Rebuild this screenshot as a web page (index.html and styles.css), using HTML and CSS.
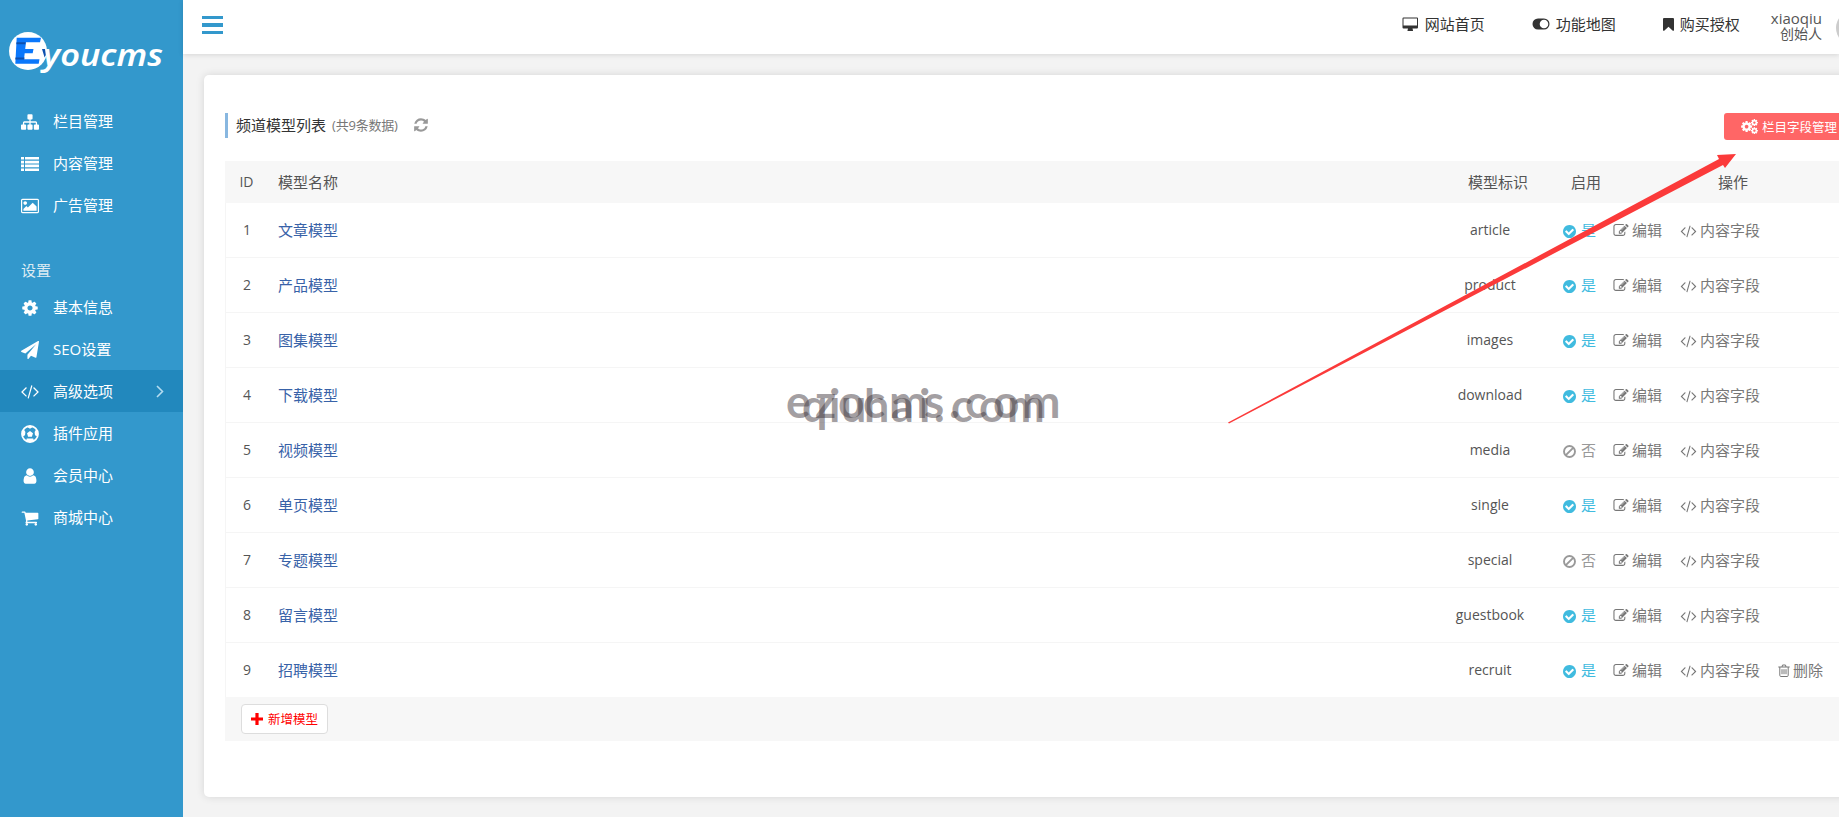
FILE: index.html
```
<!DOCTYPE html>
<html lang="zh-CN">
<head>
    <meta charset="UTF-8">
    <title>Eyoucms</title>
    <link rel="stylesheet" href="styles.css">
</head>
<body>

    <!-- icon sprite -->
    <svg class="sprite">
        <symbol id="i-sitemap" viewBox="0 0 1792 1792"><path d="M1792 1248v320q0 40-28 68t-68 28h-320q-40 0-68-28t-28-68v-320q0-40 28-68t68-28h96v-192h-512v192h96q40 0 68 28t28 68v320q0 40-28 68t-68 28h-320q-40 0-68-28t-28-68v-320q0-40 28-68t68-28h96v-192h-512v192h96q40 0 68 28t28 68v320q0 40-28 68t-68 28h-320q-40 0-68-28t-28-68v-320q0-40 28-68t68-28h96v-192q0-52 38-90t90-38h512v-192h-96q-40 0-68-28t-28-68v-320q0-40 28-68t68-28h320q40 0 68 28t28 68v320q0 40-28 68t-68 28h-96v192h512q52 0 90 38t38 90v192h96q40 0 68 28t28 68z"/></symbol>
        <symbol id="i-list" viewBox="0 0 18 18"><path d="M0 2h3v2.6H0zM4 2h14v2.6H4zM0 5.8h3v2.6H0zM4 5.8h14v2.6H4zM0 9.6h3v2.6H0zM4 9.6h14v2.6H4zM0 13.4h3V16H0zM4 13.4h14V16H4z"/></symbol>
        <symbol id="i-picture" viewBox="-64 0 1920 1792"><path d="M576 576q0 80-56 136t-136 56-136-56-56-136 56-136 136-56 136 56 56 136zm1024 384v448h-1408v-192l320-320 160 160 512-512zm96-704h-1600q-13 0-22.500 9.500t-9.500 22.500v1216q0 13 9.500 22.500t22.500 9.500h1600q13 0 22.500-9.500t9.500-22.500v-1216q0-13-9.500-22.500t-22.500-9.500zm160 32v1216q0 66-47 113t-113 47h-1600q-66 0-113-47t-47-113v-1216q0-66 47-113t113-47h1600q66 0 113 47t47 113z"/></symbol>
        <symbol id="i-cog" viewBox="0 0 1792 1792"><path d="M1152 896q0-106-75-181t-181-75-181 75-75 181 75 181 181 75 181-75 75-181zm512-109v222q0 12-8 23t-20 13l-185 28q-19 54-39 91 35 50 107 138 10 12 10 25t-9 23q-27 37-99 108t-94 71q-12 0-26-9l-138-108q-44 23-91 38-16 136-29 186-7 28-36 28h-222q-14 0-24.500-8.500t-11.500-21.500l-28-184q-49-16-90-37l-141 107q-10 9-25 9-14 0-25-11-126-114-165-168-7-10-7-23 0-12 8-23 15-21 51-66.500t54-70.500q-27-50-41-99l-183-27q-13-2-21-12.500t-8-23.500v-222q0-12 8-23t19-13l186-28q14-46 39-92-40-57-107-138-10-12-10-24 0-10 9-23 26-36 98.500-107.500t94.500-71.500q13 0 26 10l138 107q44-23 91-38 16-136 29-186 7-28 36-28h222q14 0 24.500 8.500t11.500 21.500l28 184q49 16 90 37l142-107q9-9 24-9 13 0 25 10 129 119 165 170 7 8 7 22 0 12-8 23-15 21-51 66.500t-54 70.500q26 50 41 98l183 28q13 2 21 12.500t8 23.500z"/></symbol>
        <symbol id="i-cogs" viewBox="0 0 17 15"><use href="#i-cog" x="-.8" y="1.200" width="12.800" height="12.800"/><use href="#i-cog" x="9.300" y="-.5" width="8.200" height="8.200"/><use href="#i-cog" x="9.300" y="7.600" width="8.200" height="8.200"/></symbol>
        <symbol id="i-plane" viewBox="0 0 1792 1792"><path d="M1764 11q33 24 27 64l-256 1536q-5 29-32 45-14 8-31 8-11 0-24-5l-453-185-242 295q-18 23-49 23-13 0-22-4-19-7-30.500-23.500t-11.500-36.500v-349l864-1059-1069 925-395-162q-37-14-40-55-2-40 32-59l1664-960q15-9 32-9 20 0 36 11z"/></symbol>
        <symbol id="i-code" viewBox="20 200 1880 1536"><path d="M617 1399l-50 50q-10 10-23 10t-23-10l-466-466q-10-10-10-23t10-23l466-466q10-10 23-10t23 10l50 50q10 10 10 23t-10 23l-393 393 393 393q10 10 10 23t-10 23zm591-1067l-373 1291q-4 13-15.500 19.500t-23.500 2.500l-62-17q-13-4-19.500-15.500t-2.500-24.500l373-1291q4-13 15.500-19.500t23.500-2.500l62 17q13 4 19.500 15.500t2.500 24.500zm657 651l-466 466q-10 10-23 10t-23-10l-50-50q-10-10-10-23t10-23l393-393-393-393q-10-10-10-23t10-23l50-50q10-10 23-10t23 10l466 466q10 10 10 23t-10 23z"/></symbol>
        <symbol id="i-ball" viewBox="0 0 18 18"><circle cx="9" cy="9" r="8" fill="none" stroke="currentColor" stroke-width="1.800"/><path d="M9 6l3 2.200-1.100 3.500H7.100L6 8.200zM5.500 1.600L9 3.800l3.500-2.200-3.500-.9zM1.300 6.500l.2 5L4 10.200l.4-3.100L2.600 4zM16.700 6.500l-.2 5-2.500-1.300-.4-3.100L15.400 4zM5 15.800l4 1.400 4-1.400-.8-2.400H5.800z"/></symbol>
        <symbol id="i-user" viewBox="0 0 1792 1792"><path d="M1536 1399q0 109-62.500 187t-150.500 78h-854q-88 0-150.500-78t-62.500-187q0-85 8.500-160.500t31.500-152 58.500-131 94-89 134.500-34.500q131 128 313 128t313-128q76 0 134.500 34.500t94 89 58.500 131 31.500 152 8.500 160.500zm-256-887q0 159-112.500 271.500t-271.500 112.500-271.500-112.500-112.500-271.500 112.500-271.500 271.500-112.500 271.500 112.500 112.500 271.500z"/></symbol>
        <symbol id="i-cart" viewBox="0 0 1792 1792"><path d="M704 1536q0 52-38 90t-90 38-90-38-38-90 38-90 90-38 90 38 38 90zm896 0q0 52-38 90t-90 38-90-38-38-90 38-90 90-38 90 38 38 90zm128-1088v512q0 24-16.500 42.500t-40.500 21.500l-1044 122q13 60 13 70 0 16-24 64h920q26 0 45 19t19 45-19 45-45 19h-1024q-26 0-45-19t-19-45q0-11 8-31.500t16-36 21.500-40 15.500-29.500l-177-823h-204q-26 0-45-19t-19-45 19-45 45-19h256q16 0 28.500 6.500t19.500 15.500 13 24.500 8 26 5.500 29.500 4.500 26h1201q26 0 45 19t19 45z"/></symbol>
        <symbol id="i-right" viewBox="0 0 8 13"><path d="M1 1l5.500 5.500L1 12" fill="none" stroke="currentColor" stroke-width="1.600"/></symbol>
        <symbol id="i-desktop" viewBox="0 0 17 15"><path fill-rule="evenodd" d="M1.500.5h13.500q1 0 1 1v9q0 1-1 1H10.500l.5 2q.2.500-.5.500H6q-.7 0-.5-.5l.5-2H1.500q-1 0-1-1v-9q0-1 1-1zM1.500 1.500v7H15v-7z"/></symbol>
        <symbol id="i-toggle" viewBox="0 0 18 12"><path fill-rule="evenodd" d="M6 0.500h6a5.500 5.500 0 0 1 0 11H6a5.500 5.500 0 0 1 0-11zM12 1.700a4.300 4.300 0 1 0 0 8.600 4.300 4.300 0 0 0 0-8.600z"/></symbol>
        <symbol id="i-bookmark" viewBox="0 0 11 13"><path d="M1 0h9q1 0 1 1v11.200q-.3 1-1.200.5L5.500 8.800 1.200 12.700Q.3 13.200 0 12.200V1q0-1 1-1z"/></symbol>
        <symbol id="i-refresh" viewBox="0 0 1792 1792"><path d="M1639 1056q0 5-1 7-64 268-268 434.500t-478 166.500q-146 0-282.500-55t-243.500-157l-129 129q-19 19-45 19t-45-19-19-45v-448q0-26 19-45t45-19h448q26 0 45 19t19 45-19 45l-137 137q71 66 161 102t187 36q134 0 250-65t186-179q11-17 53-117 8-23 30-23h192q13 0 22.500 9.500t9.500 22.500zm25-800v448q0 26-19 45t-45 19h-448q-26 0-45-19t-19-45 19-45l138-138q-148-137-349-137-134 0-250 65t-186 179q-11 17-53 117-8 23-30 23h-199q-13 0-22.500-9.500t-9.500-22.500v-7q65-268 270-434.500t480-166.500q146 0 284 55.500t245 156.500l130-129q19-19 45-19t45 19 19 45z"/></symbol>
        <symbol id="i-check" viewBox="128 128 1536 1536"><path d="M1412 734q0-28-18-46l-91-90q-19-19-45-19t-45 19l-408 407-226-226q-19-19-45-19t-45 19l-91 90q-18 18-18 46 0 27 18 45l362 362q19 19 45 19 27 0 46-19l543-543q18-18 18-45zm252 162q0 209-103 385.500t-279.500 279.500-385.500 103-385.500-103-279.500-279.500-103-385.500 103-385.500 279.500-279.500 385.500-103 385.500 103 279.500 279.500 103 385.500z"/></symbol>
        <symbol id="i-ban" viewBox="0 0 13 13"><path d="M6.500 1a5.500 5.500 0 1 0 0 11 5.500 5.500 0 0 0 0-11zM10.400 2.600L2.600 10.400" fill="none" stroke="currentColor" stroke-width="1.900"/></symbol>
        <symbol id="i-edit" viewBox="0 128 1792 1536"><path d="M888 1184l116-116-152-152-116 116v56h96v96h56zm440-720q-16-16-33 1l-350 350q-17 17-1 33t33-1l350-350q17-17 1-33zm80 594v190q0 119-84.500 203.500t-203.500 84.500h-832q-119 0-203.500-84.500t-84.500-203.500v-832q0-119 84.500-203.500t203.500-84.500h832q63 0 117 25 15 7 18 23 3 17-9 29l-49 49q-14 14-32 8-23-6-45-6h-832q-66 0-113 47t-47 113v832q0 66 47 113t113 47h832q66 0 113-47t47-113v-126q0-13 9-22l64-64q15-15 35-7t20 29zm-96-738l288 288-672 672h-288v-288zm444 132l-92 92-288-288 92-92q28-28 68-28t68 28l152 152q28 28 28 68t-28 68z"/></symbol>
        <symbol id="i-trash" viewBox="0 0 12 13"><path d="M.3 3h11.400M4 3l.5-2h3L8 3M1.800 3v8.300q0 1.200 1 1.200h6.400q1 0 1-1.200V3M4 5.200v5M6 5.200v5M8 5.200v5" fill="none" stroke="currentColor"/></symbol>
        <symbol id="i-plus" viewBox="0 0 12 12"><path d="M4.400 0h3.200v4.400H12v3.200H7.600V12H4.400V7.600H0V4.400h4.400z"/></symbol>
    </svg>

    <div class="sidebar">
        <div class="logo">
            <svg width="160" height="44" viewBox="0 0 160 44">
                <circle cx="19" cy="19" r="19" fill="#fff"/>
                <text class="logo-text" x="34" y="34" textLength="120" lengthAdjust="spacingAndGlyphs">youcms</text>
                <path d="M7.700 5.700H32l-1 4.600H17l-.8 6.700h8.300l-.8 4.300h-8l-.7 6h15.500l-.8 4.500H6.300z" fill="#0a77fb"/>
                <path d="M7.500 10.300h9l-.2 2h-9zM6.500 25.600h9l-.2 2h-9zM33 17h3l.8 6-1.200 2.500z" fill="#0c4fae"/>
            </svg>
        </div>
        <div class="nav">
            <a class="nav-item"><svg class="icon"><use href="#i-sitemap"/></svg>栏目管理</a>
            <a class="nav-item"><svg class="icon"><use href="#i-list"/></svg>内容管理</a>
            <a class="nav-item"><svg class="icon"><use href="#i-picture"/></svg>广告管理</a>
        </div>
        <div class="nav-title">设置</div>
        <div class="nav">
            <a class="nav-item"><svg class="icon"><use href="#i-cog"/></svg>基本信息</a>
            <a class="nav-item"><svg class="icon"><use href="#i-plane"/></svg>SEO设置</a>
            <a class="nav-item active"><svg class="icon"><use href="#i-code"/></svg>高级选项<svg class="arrow-right"><use href="#i-right"/></svg></a>
            <a class="nav-item"><svg class="icon"><use href="#i-ball"/></svg>插件应用</a>
            <a class="nav-item"><svg class="icon"><use href="#i-user"/></svg>会员中心</a>
            <a class="nav-item"><svg class="icon"><use href="#i-cart"/></svg>商城中心</a>
        </div>
    </div>

    <div class="main">
        <div class="header">
            <div class="menu-btn"><span></span><span></span><span></span></div>
            <div class="header-links">
                <a class="link-home"><svg class="ic-desktop"><use href="#i-desktop"/></svg>网站首页</a>
                <a class="link-map"><svg class="ic-toggle"><use href="#i-toggle"/></svg>功能地图</a>
                <a class="link-buy"><svg class="ic-bookmark"><use href="#i-bookmark"/></svg>购买授权</a>
                <div class="user">
                    <div class="user-name">xiaoqiu</div>
                    <div class="user-role">创始人</div>
                </div>
                <div class="avatar"></div>
            </div>
        </div>

        <div class="card">
            <div class="card-top">
                <div class="title">频道模型列表 <small>(共9条数据)</small><svg class="ic-refresh"><use href="#i-refresh"/></svg></div>
                <a class="field-btn"><svg class="ic-cogs"><use href="#i-cogs"/></svg>栏目字段管理</a>
            </div>

            <table>
                <thead>
                    <tr><th class="c-id">ID</th><th class="c-name">模型名称</th><th class="c-code">模型标识</th><th class="c-on">启用</th><th class="c-op">操作</th></tr>
                </thead>
                <tbody>
                    <tr>
                        <td class="c-id">1</td><td class="c-name">文章模型</td><td class="c-code">article</td>
                        <td class="c-on yes"><svg><use href="#i-check"/></svg>是</td>
                        <td class="c-op"><a><svg class="ic-edit"><use href="#i-edit"/></svg>编辑</a><a><svg class="ic-code"><use href="#i-code"/></svg>内容字段</a></td>
                    </tr>
                    <tr>
                        <td class="c-id">2</td><td class="c-name">产品模型</td><td class="c-code">product</td>
                        <td class="c-on yes"><svg><use href="#i-check"/></svg>是</td>
                        <td class="c-op"><a><svg class="ic-edit"><use href="#i-edit"/></svg>编辑</a><a><svg class="ic-code"><use href="#i-code"/></svg>内容字段</a></td>
                    </tr>
                    <tr>
                        <td class="c-id">3</td><td class="c-name">图集模型</td><td class="c-code">images</td>
                        <td class="c-on yes"><svg><use href="#i-check"/></svg>是</td>
                        <td class="c-op"><a><svg class="ic-edit"><use href="#i-edit"/></svg>编辑</a><a><svg class="ic-code"><use href="#i-code"/></svg>内容字段</a></td>
                    </tr>
                    <tr>
                        <td class="c-id">4</td><td class="c-name">下载模型</td><td class="c-code">download</td>
                        <td class="c-on yes"><svg><use href="#i-check"/></svg>是</td>
                        <td class="c-op"><a><svg class="ic-edit"><use href="#i-edit"/></svg>编辑</a><a><svg class="ic-code"><use href="#i-code"/></svg>内容字段</a></td>
                    </tr>
                    <tr>
                        <td class="c-id">5</td><td class="c-name">视频模型</td><td class="c-code">media</td>
                        <td class="c-on no"><svg><use href="#i-ban"/></svg>否</td>
                        <td class="c-op"><a><svg class="ic-edit"><use href="#i-edit"/></svg>编辑</a><a><svg class="ic-code"><use href="#i-code"/></svg>内容字段</a></td>
                    </tr>
                    <tr>
                        <td class="c-id">6</td><td class="c-name">单页模型</td><td class="c-code">single</td>
                        <td class="c-on yes"><svg><use href="#i-check"/></svg>是</td>
                        <td class="c-op"><a><svg class="ic-edit"><use href="#i-edit"/></svg>编辑</a><a><svg class="ic-code"><use href="#i-code"/></svg>内容字段</a></td>
                    </tr>
                    <tr>
                        <td class="c-id">7</td><td class="c-name">专题模型</td><td class="c-code">special</td>
                        <td class="c-on no"><svg><use href="#i-ban"/></svg>否</td>
                        <td class="c-op"><a><svg class="ic-edit"><use href="#i-edit"/></svg>编辑</a><a><svg class="ic-code"><use href="#i-code"/></svg>内容字段</a></td>
                    </tr>
                    <tr>
                        <td class="c-id">8</td><td class="c-name">留言模型</td><td class="c-code">guestbook</td>
                        <td class="c-on yes"><svg><use href="#i-check"/></svg>是</td>
                        <td class="c-op"><a><svg class="ic-edit"><use href="#i-edit"/></svg>编辑</a><a><svg class="ic-code"><use href="#i-code"/></svg>内容字段</a></td>
                    </tr>
                    <tr>
                        <td class="c-id">9</td><td class="c-name">招聘模型</td><td class="c-code">recruit</td>
                        <td class="c-on yes"><svg><use href="#i-check"/></svg>是</td>
                        <td class="c-op"><a><svg class="ic-edit"><use href="#i-edit"/></svg>编辑</a><a><svg class="ic-code"><use href="#i-code"/></svg>内容字段</a><a><svg class="ic-trash"><use href="#i-trash"/></svg>删除</a></td>
                    </tr>
                </tbody>
            </table>
            <div class="table-foot">
                <a class="add-btn"><svg><use href="#i-plus"/></svg>新增模型</a>
            </div>
        </div>
    </div>

    <!-- watermark and pointer arrow over the page -->
    <svg class="overlay" viewBox="0 0 1839 817">
        <g class="watermark">
            <text class="mark-a" y="418" x="786 815 838 863 889 924 949 965 993 1022">ezocms.com</text>
            <text class="mark-b" y="422" x="802 829 841 864 891 919 934 951 979 1007">qiuhai.com</text>
        </g>
        <path d="M1228 422.500L1719 159l-2-4 19-1-11 14-2-3L1229 423.500z" fill="#fb3a3a"/>
    </svg>

</body>
</html>
```
FILE: styles.css
```
* {
    box-sizing: border-box;
}

body {
    margin: 0;
    display: flex;
    height: 100vh;
    overflow: hidden;
    background: #f3f3f3;
    font-family: "Open Sans", "Noto Sans CJK SC", sans-serif;
    font-size: 15px;
    color: #555;
}

svg {
    fill: currentColor;
    flex: none;
}

.sprite {
    display: none;
}

/* sidebar */
.sidebar {
    width: 183px;
    flex: none;
    background: #3398cc;
    color: #fff;
}

.logo {
    height: 100px;
    padding: 32px 0 0 9px;
}

.logo-text {
    font: italic 600 31px "Noto Sans", sans-serif;
    fill: #fff;
}

.nav-item {
    display: flex;
    align-items: center;
    height: 42px;
    padding: 0 0 2px 21px;
}

.nav-item .icon {
    width: 18px;
    height: 18px;
    margin: 3px 14px 0 0;
}

.nav-item.active {
    background: #2288bd;
}

.arrow-right {
    width: 8px;
    height: 13px;
    margin: 3px 19px 0 auto;
    color: #b5dcf0;
}

.nav-title {
    height: 60px;
    padding: 33px 0 0 21px;
    line-height: 22px;
    color: #dcebf3;
}

/* header */
.main {
    flex: 1;
    min-width: 0;
}

.header {
    display: flex;
    height: 54px;
    background: #fff;
    box-shadow: 0 1px 5px rgba(0, 0, 0, 0.12);
    color: #333;
    overflow-x: clip;
}

.menu-btn {
    display: flex;
    flex-direction: column;
    gap: 4px;
    margin: 16px 0 0 19px;
}

.menu-btn span {
    width: 21px;
    height: 3.300px;
    background: #3398cc;
}

.header-links {
    display: flex;
    margin-left: auto;
}

.header-links a {
    display: flex;
    align-items: center;
    height: 46px;
    gap: 6px;
    margin-right: 47px;
}

.header-links a svg {
    margin-top: 2px;
}

.header-links .link-buy {
    margin-right: 31px;
}

.ic-desktop {
    width: 17px;
    height: 15px;
}

.ic-toggle {
    width: 18px;
    height: 12px;
}

.ic-bookmark {
    width: 11px;
    height: 13px;
}

.user {
    padding-top: 10px;
    line-height: 16px;
    text-align: right;
    color: #555;
}

.user-role {
    font-size: 14px;
    line-height: 15px;
}

.avatar {
    width: 34px;
    height: 34px;
    margin: 11px -31px 0 14px;
    border-radius: 50%;
    background: #ccc;
}

/* card */
.card {
    width: 1740px;
    height: 722px;
    margin: 21px 0 0 21px;
    padding: 38px 21px 0;
    background: #fff;
    border-radius: 5px;
    box-shadow: 0 0 8px rgba(0, 0, 0, 0.12);
}

.card-top {
    display: flex;
    height: 48px;
    align-items: flex-start;
}

.title {
    display: flex;
    align-items: center;
    width: 1499px;
    height: 25px;
    padding: 0 0 2px 8px;
    border-left: 3px solid #88b7e0;
    color: #333;
}

.title small {
    margin-left: 6px;
    font-size: 13px;
    letter-spacing: -0.200px;
    color: #777;
}

.ic-refresh {
    width: 16px;
    height: 16px;
    margin-left: 15px;
    color: #999;
}

.field-btn {
    display: flex;
    align-items: center;
    width: 140px;
    height: 27px;
    padding: 0 0 1px 17px;
    border-radius: 3px;
    background: #ff6666;
    color: #fff;
    font-size: 12.500px;
    white-space: nowrap;
}

.ic-cogs {
    width: 17px;
    height: 15px;
    margin-right: 4px;
}

/* table */
table {
    width: 100%;
    table-layout: fixed;
    border-collapse: separate;
    border-spacing: 0;
}

th {
    height: 42px;
    padding: 0 0 2px;
    background: #f7f7f7;
    font-weight: normal;
}

td {
    height: 55px;
    padding: 0 0 2px;
    border-bottom: 1px solid #f5f5f5;
}

tbody tr:last-child td {
    height: 54px;
    border-bottom: none;
}

td.c-id {
    border-left: 1px solid #f5f5f5;
}

.c-id {
    width: 43px;
    text-align: center;
    font-size: 14px;
}

.c-name {
    width: 1172px;
    padding-left: 10px;
    text-align: left;
}

td.c-name {
    color: #3862a8;
}

.c-code {
    width: 100px;
    text-align: center;
}

td.c-code {
    font-size: 14px;
}

th.c-code {
    padding-left: 16px;
}

.c-on {
    width: 72px;
    padding-left: 23px;
    text-align: left;
}

th.c-on {
    padding-left: 31px;
}

.c-on svg {
    width: 13px;
    height: 13px;
    margin-right: 5px;
    vertical-align: -2px;
}

.yes {
    color: #40bbdf;
}

.no {
    color: #999;
}

.c-op {
    padding-left: 1px;
    text-align: left;
    color: #777;
}

td.c-op {
    padding-bottom: 1px;
}

th.c-op {
    padding-left: 106px;
    color: #555;
}

.c-op a {
    margin-right: 18px;
}

.c-op svg {
    height: 13px;
    margin-right: 3px;
    vertical-align: -1px;
}

.c-op .ic-edit {
    width: 16px;
}

.c-op .ic-code {
    width: 17px;
    vertical-align: -2px;
}

.c-op .ic-trash {
    width: 12px;
}

.table-foot {
    height: 44px;
    padding: 7px 16px;
    background: #f7f7f7;
}

.add-btn {
    display: flex;
    align-items: center;
    width: 87px;
    height: 30px;
    padding: 0 0 1px 9px;
    border: 1px solid #ddd;
    border-radius: 4px;
    background: #fff;
    color: #f00;
    font-size: 12.500px;
}

.add-btn svg {
    width: 12px;
    height: 12px;
    margin-right: 5px;
}

.overlay {
    position: absolute;
    left: 0;
    top: 0;
    width: 1839px;
    height: 817px;
}

.watermark text {
    font-family: Lato, sans-serif;
    font-weight: bold;
    fill: #3c343a;
    fill-opacity: 0.48;
}

.mark-a {
    font-size: 46px;
}

.mark-b {
    font-size: 45px;
}
```
